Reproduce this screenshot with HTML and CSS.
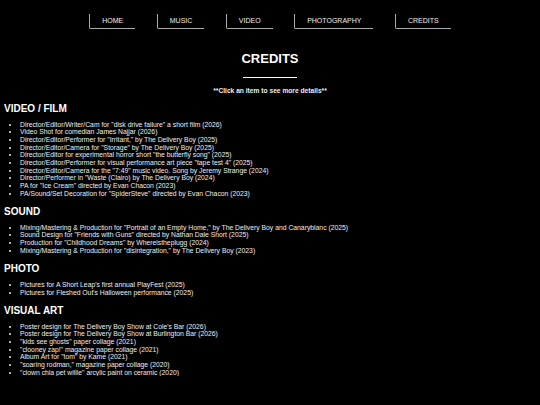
FILE: index.html
```
<!DOCTYPE html>
<html>
<head>
<meta charset="utf-8">
<link rel="stylesheet" href="styles.css">
</head>
<body>
<nav class="nav">
  <a class="nav-item" href="#">HOME</a>
  <a class="nav-item" href="#">MUSIC</a>
  <a class="nav-item" href="#">VIDEO</a>
  <a class="nav-item" href="#">PHOTOGRAPHY</a>
  <a class="nav-item" href="#">CREDITS</a>
</nav>
<header class="page-head">
  <h1 class="title">CREDITS</h1>
  <div class="rule"></div>
  <p class="hint">**Click an item to see more details**</p>
</header>
<section class="section">
  <h2 class="section-title">VIDEO / FILM</h2>
  <ul class="list">
    <li>Director/Editor/Writer/Cam for "disk drive failure" a short film (2026)</li>
    <li>Video Shot for comedian James Najjar (2026)</li>
    <li>Director/Editor/Performer for "Irritant," by The Delivery Boy (2025)</li>
    <li>Director/Editor/Camera for "Storage" by The Delivery Boy (2025)</li>
    <li>Director/Editor for experimental horror short "the butterfly song" (2025)</li>
    <li>Director/Editor/Performer for visual performance art piece "tape test 4" (2025)</li>
    <li>Director/Editor/Camera for the "7:49" music video. Song by Jeremy Strange (2024)</li>
    <li>Director/Performer in "Waste (Clairo) by The Delivery Boy (2024)</li>
    <li>PA for "Ice Cream" directed by Evan Chacon (2023)</li>
    <li>PA/Sound/Set Decoration for "SpiderSteve" directed by Evan Chacon (2023)</li>
  </ul>
</section>
<section class="section">
  <h2 class="section-title">SOUND</h2>
  <ul class="list">
    <li>Mixing/Mastering &amp; Production for "Portrait of an Empty Home," by The Delivery Boy and Canaryblanc (2025)</li>
    <li>Sound Design for "Friends with Guns" directed by Nathan Dale Short (2025)</li>
    <li>Production for "Childhood Dreams" by Whereistheplugg (2024)</li>
    <li>Mixing/Mastering &amp; Production for "disintegration," by The Delivery Boy (2023)</li>
  </ul>
</section>
<section class="section">
  <h2 class="section-title">PHOTO</h2>
  <ul class="list">
    <li>Pictures for A Short Leap's first annual PlayFest (2025)</li>
    <li>Pictures for Fleshed Out's Halloween performance (2025)</li>
  </ul>
</section>
<section class="section">
  <h2 class="section-title">VISUAL ART</h2>
  <ul class="list">
    <li>Poster design for The Delivery Boy Show at Cole's Bar (2026)</li>
    <li>Poster design for The Delivery Boy Show at Burlington Bar (2026)</li>
    <li>"kids see ghosts" paper collage (2021)</li>
    <li>"clooney zap!" magazine paper collage (2021)</li>
    <li>Album Art for "tom" by Kame (2021)</li>
    <li>"soaring rodman," magazine paper collage (2020)</li>
    <li>"clown chia pet willie" arcylic paint on ceramic (2020)</li>
  </ul>
</section>
</body>
</html>
```
FILE: styles.css
```
html, body {
  background: #000;
}
body {
  margin: 4px;
  color: #fff;
  font-family: "Liberation Sans", Arial, sans-serif;
}
.nav {
  display: flex;
  justify-content: center;
  gap: 21.5px;
  padding-top: 10px;
}
.nav-item {
  display: block;
  padding: 3px 12px;
  font-size: 7px;
  line-height: 8px;
  color: #eee;
  text-decoration: none;
  border-left: 1px solid #aaa;
  border-bottom: 1px solid #aaa;
  border-bottom-left-radius: 2px;
}
.page-head {
  text-align: center;
  margin-top: 22px;
}
.title {
  margin: 0;
  font-size: 13px;
  line-height: 15px;
  font-weight: bold;
}
.rule {
  width: 54px;
  height: 1px;
  background: #fff;
  margin: 11px auto 0;
}
.hint {
  margin: 9px 0 0;
  font-size: 6.67px;
  font-weight: bold;
  color: #eee;
}
.section-title {
  margin: 9px 0 6.5px;
  font-size: 10px;
  font-weight: bold;
}
.list {
  margin: 0;
  padding-left: 16px;
  font-size: 6.8px;
  line-height: 7.67px;
  color: #eee;
}
```
